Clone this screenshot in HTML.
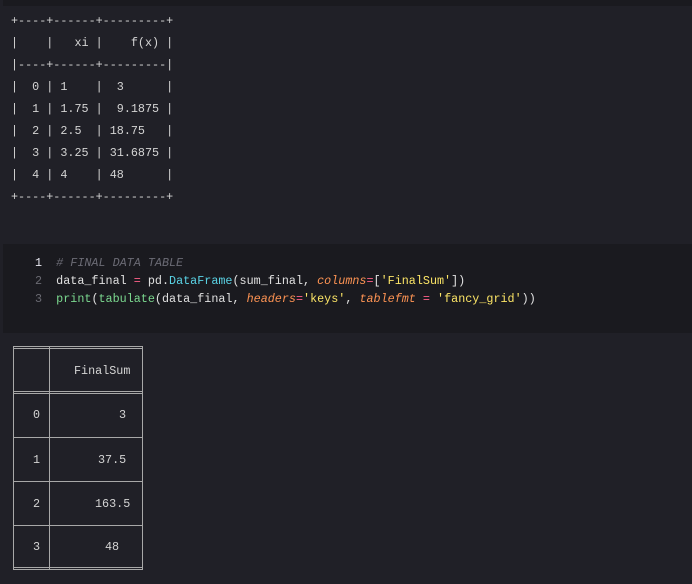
<!DOCTYPE html>
<html><head><style>
body{margin:0;background:#202027;width:692px;height:584px;overflow:hidden;position:relative;font-family:"Liberation Mono",monospace;color:#d0d0d0}
.top{position:absolute;left:3px;top:0;width:689px;height:6px;background:#1a1a1f}
pre{margin:0;font-family:"Liberation Mono",monospace}
.out{position:absolute;left:11px;top:10px;font-size:11.75px;line-height:22px;color:#d4d4d4}
.code{position:absolute;left:3px;top:244px;width:689px;height:89px;background:#1a1a1f}
.code pre{position:absolute;left:32px;top:10px;font-size:11.75px;line-height:18px;color:#e0e0e0}
.ln{color:#6a6a72}.ln1{color:#e8e8f0}
.cm{color:#6b6b75;font-style:italic}
.op{color:#ff6188}.fn{color:#7bd88f}.cl{color:#5ad4e6}.kw{color:#fd9353;font-style:italic}.st{color:#fce566}
.g{position:absolute;left:13px;top:346px;width:130px;height:223px}
.v{position:absolute;background:#a8a8a8;width:1px}
.h{position:absolute;background:#a8a8a8;height:1px;left:0;width:130px}
.t{position:absolute;font-size:11.75px;color:#d4d4d4;line-height:14px}
</style></head><body>
<div class="top"></div>
<pre class="out">+----+------+---------+
|    |   xi |    f(x) |
|----+------+---------|
|  0 | 1    |  3      |
|  1 | 1.75 |  9.1875 |
|  2 | 2.5  | 18.75   |
|  3 | 3.25 | 31.6875 |
|  4 | 4    | 48      |
+----+------+---------+</pre>
<div class="code"><pre><span class="ln1">1</span>  <span class="cm"># FINAL DATA TABLE</span>
<span class="ln">2</span>  data_final <span class="op">=</span> pd.<span class="cl">DataFrame</span>(sum_final, <span class="kw">columns</span><span class="op">=</span>[<span class="st">'FinalSum'</span>])
<span class="ln">3</span>  <span class="fn">print</span>(<span class="fn">tabulate</span>(data_final, <span class="kw">headers</span><span class="op">=</span><span class="st">'keys'</span>, <span class="kw">tablefmt</span> <span class="op">=</span> <span class="st">'fancy_grid'</span>))</pre></div>
<div class="g">
<div class="v" style="left:0;top:0;height:223px"></div>
<div class="v" style="left:36px;top:0;height:223px"></div>
<div class="v" style="left:129px;top:0;height:223px"></div>
<div class="h" style="top:0"></div><div class="h" style="top:2px"></div>
<div class="h" style="top:45px"></div><div class="h" style="top:47px"></div>
<div class="h" style="top:91px"></div>
<div class="h" style="top:135px"></div>
<div class="h" style="top:179px"></div>
<div class="h" style="top:221px"></div><div class="h" style="top:223px"></div>
<div class="t" style="left:61px;top:18px">FinalSum</div>
<div class="t" style="left:20px;top:62px">0</div><div class="t" style="left:106px;top:62px">3</div>
<div class="t" style="left:20px;top:107px">1</div><div class="t" style="left:85px;top:107px">37.5</div>
<div class="t" style="left:20px;top:151px">2</div><div class="t" style="left:82px;top:151px">163.5</div>
<div class="t" style="left:20px;top:194px">3</div><div class="t" style="left:92px;top:194px">48</div>
</div>
</body></html>
